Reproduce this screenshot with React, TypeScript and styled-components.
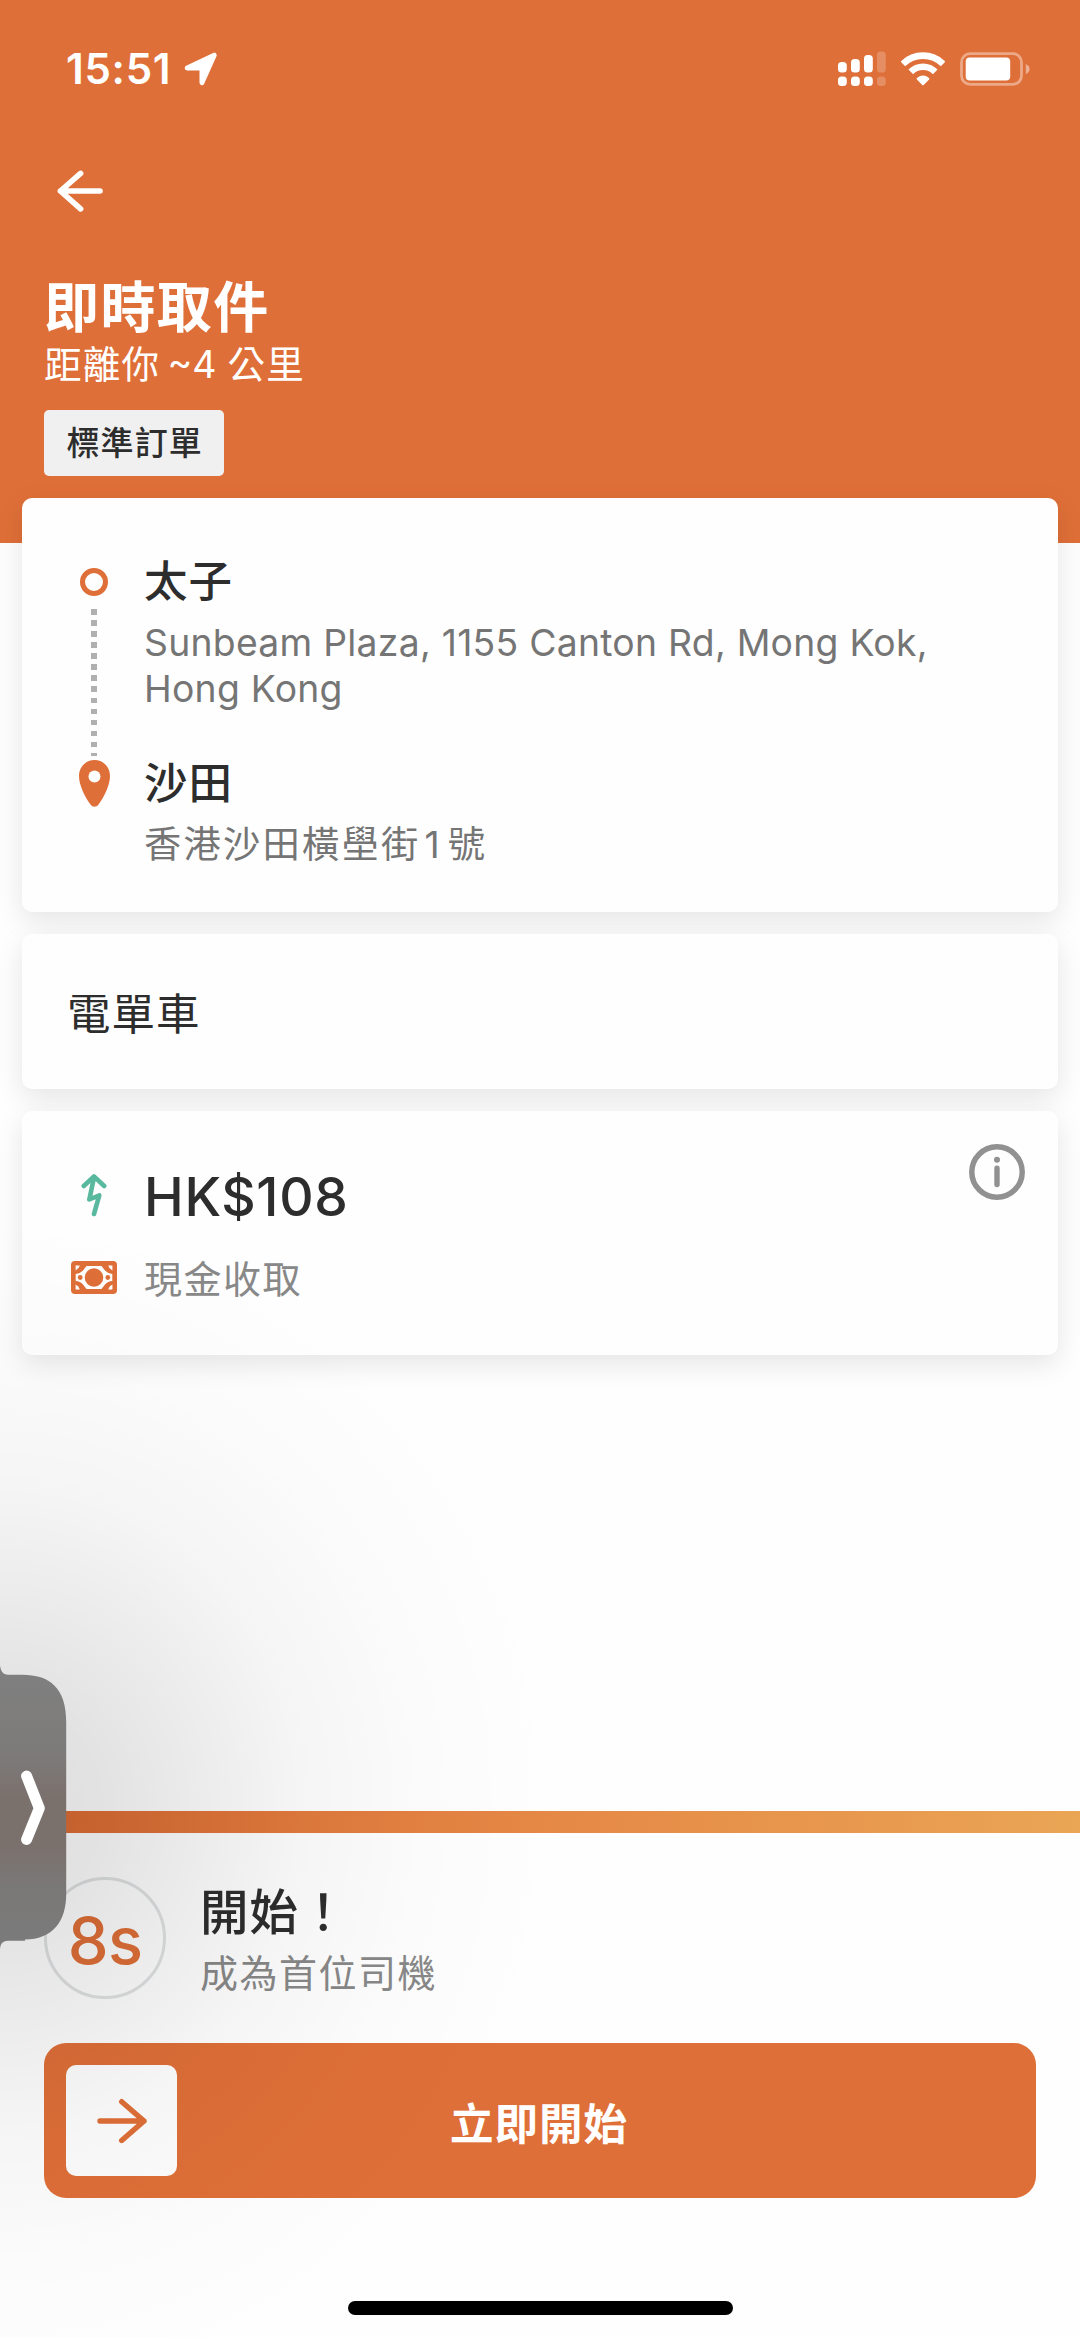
import React from "react";
import styled, { createGlobalStyle } from "styled-components";

const ORANGE = "#df6f38";
const INK = "#2d2d2d";

const GlobalStyle = createGlobalStyle`
  * { box-sizing: border-box; }
  body {
    margin: 0;
    background: #fff;
    font-family: Inter, "Noto Sans CJK TC", sans-serif;
  }
`;

const Screen = styled.div`
  position: relative;
  width: 1080px;
  height: 2337px;
  overflow: hidden;
  display: flex;
  flex-direction: column;
  background: #fefefe;
`;

const Header = styled.header`
  height: 543px;
  flex: none;
  background: ${ORANGE};
  color: #fff;
  display: flex;
  flex-direction: column;
  align-items: flex-start;
  padding: 44px 44px 0;
`;

const StatusBar = styled.div`
  align-self: stretch;
  height: 50px;
  display: flex;
  align-items: center;
  justify-content: space-between;
  padding: 0 6px 0 22px;
`;

const StatusGroup = styled.div<{ $gap: number }>`
  display: flex;
  align-items: center;
  gap: ${(p) => p.$gap}px;
`;

const Clock = styled.span`
  font-size: 42px;
  line-height: 50px;
  font-weight: 600;
  letter-spacing: 0.7px;
`;

const BackButton = styled.button`
  margin: 71px 0 0 9px;
  padding: 0;
  width: 54px;
  height: 52px;
  border: 0;
  background: none;
  display: flex;
`;

const Title = styled.h1`
  margin: 60px 0 0;
  font-size: 55px;
  line-height: 60px;
  font-weight: 700;
  letter-spacing: 1.4px;
`;

const Distance = styled.p`
  margin: 7px 0 0;
  height: 42px;
  display: flex;
  font-size: 37.5px;
  line-height: 42px;
  letter-spacing: 1.3px;
`;

const DistanceValue = styled.span`
  margin: 0 11px 0 7px;
  letter-spacing: 0;
`;

const Tag = styled.span`
  margin-top: 24px;
  height: 66px;
  padding: 0 21.5px 0 22.5px;
  border-radius: 5px;
  background: #f0f0f0;
  color: ${INK};
  font-size: 33px;
  line-height: 67px;
  font-weight: 500;
  letter-spacing: 1.1px;
`;

const Cards = styled.main`
  flex: 1;
  margin-top: -45px;
  padding: 0 22px;
  display: flex;
  flex-direction: column;
  gap: 22px;
`;

const Card = styled.section<{ $height: number; $pad: string }>`
  position: relative;
  height: ${(p) => p.$height}px;
  padding: ${(p) => p.$pad};
  border-radius: 10px;
  background: #fefefe;
  box-shadow: 0 9px 28px rgba(0, 0, 0, 0.1);
  display: flex;
`;

const Rail = styled.div`
  width: 56px;
  margin-right: 22px;
  padding-top: 9px;
  display: flex;
  flex-direction: column;
  align-items: center;
`;

const Ring = styled.div`
  width: 28px;
  height: 28px;
  border: 5px solid ${ORANGE};
  border-radius: 50%;
`;

const Dots = styled.div`
  width: 6px;
  height: 147px;
  margin: 13px 0 4px;
  background: repeating-linear-gradient(#b0b0b0 0 5.6px, transparent 5.6px 11.07px);
`;

const Stops = styled.div`
  display: flex;
  flex-direction: column;
  gap: 48px;
`;

const Place = styled.h2`
  margin: 0 0 17px;
  font-size: 43.5px;
  line-height: 44px;
  font-weight: 500;
  letter-spacing: 1px;
  color: ${INK};
`;

const Address = styled.p<{ $tracking: number }>`
  margin: 0;
  width: 820px;
  font-size: 37.3px;
  line-height: 46.3px;
  letter-spacing: ${(p) => p.$tracking}px;
  color: #757575;
`;

const Digit = styled.span`
  margin: 0 8px 0 4px;
  letter-spacing: 0;
`;

const Vehicle = styled.p`
  margin: 0;
  font-size: 43.5px;
  line-height: 50px;
  letter-spacing: 1px;
  color: ${INK};
`;

const Fare = styled.div`
  display: flex;
  flex-direction: column;
  gap: 24px;
`;

const FareRow = styled.div<{ $height: number }>`
  height: ${(p) => p.$height}px;
  display: flex;
  align-items: center;
  gap: 22px;
`;

const IconSlot = styled.span<{ $lift: number }>`
  width: 56px;
  padding-bottom: ${(p) => p.$lift}px;
  display: flex;
  justify-content: center;
`;

const Price = styled.strong`
  font-size: 53.3px;
  line-height: 60px;
  padding-top: 1px;
  font-weight: 500;
  letter-spacing: 0.7px;
  color: ${INK};
`;

const Muted = styled.span`
  font-size: 38px;
  line-height: 44px;
  letter-spacing: 1.5px;
  color: #888;
`;

const InfoButton = styled.button`
  margin-left: auto;
  padding: 0;
  width: 56px;
  height: 56px;
  border: 0;
  background: none;
`;

const Sheet = styled.footer`
  height: 526px;
  flex: none;
  display: flex;
  flex-direction: column;
`;

const Progress = styled.div`
  height: 22px;
  background: linear-gradient(90deg, #de6a32, #e58745 48%, #eaa555);
`;

const Countdown = styled.div`
  margin: 44px 44px;
  height: 122px;
  display: flex;
  gap: 34px;
`;

const Timer = styled.div`
  width: 122px;
  height: 122px;
  border: 3px solid #dfe1e2;
  border-radius: 50%;
  display: flex;
  align-items: center;
  justify-content: center;
  font-size: 65px;
  font-weight: 550;
  padding-top: 4px;
  letter-spacing: -0.8px;
  color: ${ORANGE};
`;

const StartText = styled.div`
  display: flex;
  flex-direction: column;
  padding-top: 9px;
  gap: 10.5px;
`;

const StartTitle = styled.h2`
  margin: 0;
  font-size: 48.5px;
  line-height: 54px;
  font-weight: 500;
  letter-spacing: 1px;
  color: ${INK};
`;

const SlideButton = styled.button`
  margin: 0 44px;
  height: 155px;
  padding: 0 175px 0 22px;
  border: 0;
  border-radius: 22px;
  background: ${ORANGE};
  color: #fff;
  display: flex;
  align-items: center;
  font: 700 43.5px/52px Inter, "Noto Sans CJK TC", sans-serif;
  letter-spacing: 1px;
`;

const SlideKnob = styled.span`
  width: 111px;
  height: 111px;
  border-radius: 10px;
  background: #fefefe;
  display: flex;
  align-items: center;
  justify-content: center;
`;

const SlideLabel = styled.span`
  margin-left: 273px;
  padding-top: 6px;
  white-space: nowrap;
`;

const HomeIndicator = styled.div`
  width: 385px;
  height: 14px;
  border-radius: 7px;
  background: #000;
  align-self: center;
  margin: auto 0 22px;
`;

const EdgeShade = styled.div`
  position: absolute;
  left: 0;
  top: 1180px;
  width: 600px;
  height: 1157px;
  pointer-events: none;
  background: radial-gradient(
    ellipse 560px 600px at 0 628px,
    rgba(0, 0, 0, 0.125) 0%,
    rgba(0, 0, 0, 0.11) 18%,
    rgba(0, 0, 0, 0.075) 35%,
    rgba(0, 0, 0, 0.035) 54%,
    rgba(0, 0, 0, 0.01) 76%,
    rgba(0, 0, 0, 0) 100%
  );
`;

const EdgeHandle = styled.div`
  position: absolute;
  left: 0;
  top: 1664px;
  width: 68px;
  height: 288px;
`;

const LocationArrow = () => (
  <svg width="34" height="34" viewBox="0 0 34 34" fill="#fff" stroke="#fff" strokeWidth="5" strokeLinejoin="round">
    <path d="M3.2 15.9 30.2 3.2 18 30.6V16Z" />
  </svg>
);

const Signal = () => (
  <svg width="48" height="36" viewBox="0 0 48 36" fill="#fff">
    <rect x="0" y="11" width="8.8" height="10.6" rx="3.6" />
    <rect x="13" y="8" width="8.8" height="13.6" rx="3.6" />
    <rect x="26" y="4" width="8.8" height="17.6" rx="3.6" />
    <rect x="39" y="0.5" width="8.8" height="21" rx="3.6" opacity=".22" />
    <rect x="0" y="25.5" width="8.8" height="9.6" rx="3.6" />
    <rect x="13" y="25.5" width="8.8" height="9.6" rx="3.6" />
    <rect x="26" y="25.5" width="8.8" height="9.6" rx="3.6" />
    <rect x="39" y="25.5" width="8.8" height="9.6" rx="3.6" opacity=".22" />
  </svg>
);

const Wifi = () => (
  <svg width="44" height="34" viewBox="0 0 44 34" fill="none" stroke="#fff" strokeWidth="6.6">
    <path d="M1.9 11.9A28.6 28.6 0 0 1 42.1 11.9" />
    <path d="M9.8 19.8A17.2 17.2 0 0 1 34.2 19.8" />
    <path d="M16.6 26.8Q22 22.4 27.4 26.8L22 32.2Z" fill="#fff" strokeWidth="2" strokeLinejoin="round" />
  </svg>
);

const Battery = () => (
  <svg width="70" height="34" viewBox="0 0 70 34">
    <rect x="1.5" y="1.7" width="60" height="30.6" rx="8.5" fill="none" stroke="#fff" strokeOpacity=".4" strokeWidth="2.8" />
    <rect x="5.7" y="5.6" width="44.5" height="22.8" rx="4" fill="#fff" />
    <path d="M65.8 12Q69.6 13.5 69.6 17T65.8 22Z" fill="#fff" opacity=".45" />
  </svg>
);

const BackArrow = () => (
  <svg width="54" height="52" viewBox="0 0 54 52" fill="none" stroke="#fff" strokeWidth="5.6" strokeLinecap="round" strokeLinejoin="round">
    <path d="M47 26H7.4M27.6 8.4 7.4 26 27.6 43.8" />
  </svg>
);

const Pin = () => (
  <svg width="31" height="47" viewBox="0 0 31 47">
    <path
      d="M15.5 0C6.8 0 0 7 0 16c0 9.5 6.3 21.5 11.5 28.5 2 3 6 3 8 0C24.7 37.5 31 25.5 31 16 31 7 24.2 0 15.5 0Z"
      fill={ORANGE}
    />
    <circle cx="15.5" cy="16.4" r="6" fill="#fff" />
  </svg>
);

const Boost = () => (
  <svg width="26" height="44" viewBox="0 0 26 44" fill="none" stroke="#58b99f" strokeWidth="4.6" strokeLinecap="round" strokeLinejoin="round">
    <path d="M2.8 13 13 3.3 23.2 13M13 4.5 8.3 26.5 18.3 22.3 13 41" />
  </svg>
);

const Cash = () => (
  <svg width="46" height="33" viewBox="0 0 46 33">
    <rect width="46" height="33" rx="4" fill={ORANGE} />
    <g fill="#fff">
      <path d="M15.5 5H30.5L34 9.5Q37 12.8 41.3 13V20Q37 20.2 34 23.5L30.5 28H15.5L12 23.5Q9 20.2 4.7 20V13Q9 12.8 12 9.5Z" />
      <path d="M4.6 4.6H8.8Q8 8 4.6 9.5ZM41.4 4.6H37.2Q38 8 41.4 9.5ZM4.6 28.4H8.8Q8 25 4.6 23.5ZM41.4 28.4H37.2Q38 25 41.4 23.5Z" />
    </g>
    <g fill={ORANGE}>
      <circle cx="23" cy="16.5" r="9.3" />
      <circle cx="9.2" cy="16.5" r="2.4" />
      <circle cx="36.8" cy="16.5" r="2.4" />
    </g>
  </svg>
);

const Info = () => (
  <svg width="56" height="56" viewBox="0 0 56 56" fill="none" stroke="#919191">
    <circle cx="28" cy="28" r="25.2" strokeWidth="5.5" />
    <path d="M28 24.2V40.5" strokeWidth="5.4" strokeLinecap="round" />
    <circle cx="28" cy="15.7" r="3" fill="#919191" stroke="none" />
  </svg>
);

const ForwardArrow = () => (
  <svg width="50" height="46" viewBox="0 0 50 46" fill="none" stroke={ORANGE} strokeWidth="5.4" strokeLinecap="round" strokeLinejoin="round">
    <path d="M3 23H47M24.7 3.7 47 23 24.7 42.5" />
  </svg>
);

const HandleShape = () => (
  <svg width="68" height="288" viewBox="0 0 68 288">
    <defs>
      <linearGradient id="handle" x1="0" y1="0" x2="0" y2="1">
        <stop offset="0" stopColor="#808080" />
        <stop offset=".3" stopColor="#7d7b7a" />
        <stop offset=".48" stopColor="#7a706c" />
        <stop offset=".62" stopColor="#7a706c" />
        <stop offset=".78" stopColor="#7a7877" />
        <stop offset="1" stopColor="#7b7b7b" />
      </linearGradient>
    </defs>
    <path
      d="M0 1C.6 7 3 10.7 8 10.7H22C50 10.7 66.2 24 66.2 58V230C66.2 258 52 275.500 25 275.500V276.700H8C3 277 .6 279 0 285Z"
      fill="url(#handle)"
    />
    <path d="M26.6 112 39.3 144.3 26.6 175.5" fill="none" stroke="#fff" strokeWidth="11" strokeLinecap="round" strokeLinejoin="round" />
  </svg>
);

export default function App() {
  return (
    <>
      <GlobalStyle />
      <Screen>
        <Header>
          <StatusBar>
            <StatusGroup $gap={13}>
              <Clock>15:51</Clock>
              <LocationArrow />
            </StatusGroup>
            <StatusGroup $gap={15}>
              <Signal />
              <Wifi />
              <Battery />
            </StatusGroup>
          </StatusBar>
          <BackButton aria-label="返回">
            <BackArrow />
          </BackButton>
          <Title>即時取件</Title>
          <Distance>
            距離你<DistanceValue>~4</DistanceValue>公里
          </Distance>
          <Tag>標準訂單</Tag>
        </Header>

        <Cards>
          <Card $height={414} $pad="61px 0 0 44px">
            <Rail>
              <Ring />
              <Dots />
              <Pin />
            </Rail>
            <Stops>
              <div>
                <Place>太子</Place>
                <Address $tracking={0.27}>Sunbeam Plaza, 1155 Canton Rd, Mong Kok, Hong Kong</Address>
              </div>
              <div>
                <Place>沙田</Place>
                <Address $tracking={2.2}>
                  香港沙田橫壆街<Digit>1</Digit>號
                </Address>
              </div>
            </Stops>
          </Card>

          <Card $height={155} $pad="55px 0 0 45px">
            <Vehicle>電單車</Vehicle>
          </Card>

          <Card $height={244} $pad="33px 33px 0 44px">
            <Fare>
              <FareRow $height={104}>
                <IconSlot $lift={2}>
                  <Boost />
                </IconSlot>
                <Price>HK$108</Price>
              </FareRow>
              <FareRow $height={14}>
                <IconSlot $lift={3}>
                  <Cash />
                </IconSlot>
                <Muted>現金收取</Muted>
              </FareRow>
            </Fare>
            <InfoButton aria-label="詳情">
              <Info />
            </InfoButton>
          </Card>
        </Cards>

        <Sheet>
          <Progress />
          <Countdown>
            <Timer>8s</Timer>
            <StartText>
              <StartTitle>開始！</StartTitle>
              <Muted>成為首位司機</Muted>
            </StartText>
          </Countdown>
          <SlideButton>
            <SlideKnob>
              <ForwardArrow />
            </SlideKnob>
            <SlideLabel>立即開始</SlideLabel>
          </SlideButton>
          <HomeIndicator />
        </Sheet>

        <EdgeShade />
        <EdgeHandle>
          <HandleShape />
        </EdgeHandle>
      </Screen>
    </>
  );
}
